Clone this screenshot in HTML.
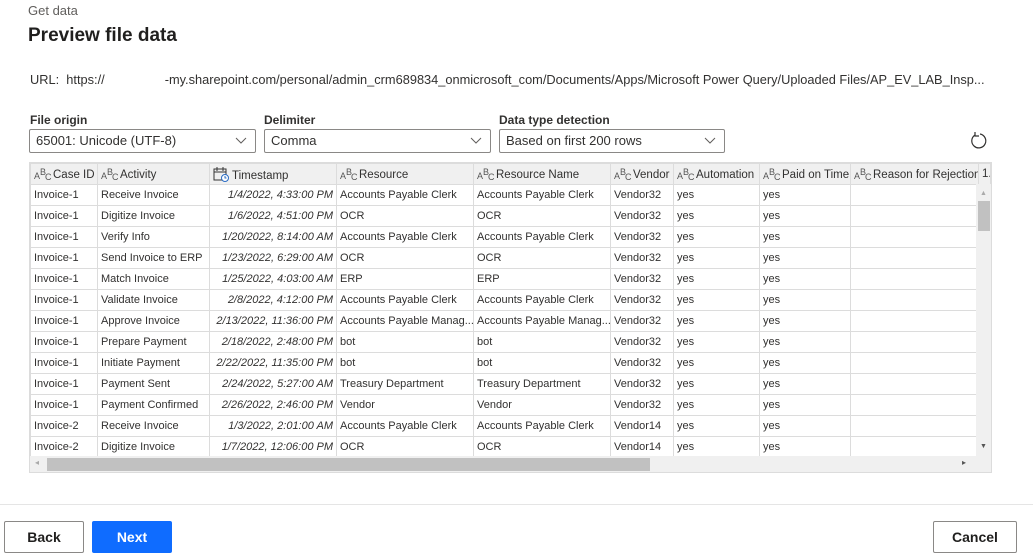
<!DOCTYPE html>
<html><head><style>
*{box-sizing:border-box;margin:0;padding:0}
body{width:1033px;height:556px;background:#fff;font-family:"Liberation Sans",sans-serif;color:#201f1e;position:relative;overflow:hidden}
.a{position:absolute}
.lbl{font-size:12px;font-weight:bold;color:#323130}
.sel{position:absolute;top:129px;height:24px;border:1px solid #8a8886;border-radius:2px;font-size:13px;padding:3px 6px;color:#323130}
.sel svg{position:absolute;right:8px;top:7px}
table{border-collapse:collapse;table-layout:fixed;font-size:11px;color:#323130}
td,th{height:21px;border:1px solid #dcdcdc;padding:0 3px;white-space:nowrap;overflow:hidden;text-align:left;font-weight:normal}
th{background:#f0f0f0;font-size:11.5px;height:21px}
td.t{text-align:right;font-style:italic}
.ic{display:inline-block;position:relative;width:17px;height:14px;vertical-align:-3px;font-size:9px;color:#555;margin-right:2px}
.ic i{position:absolute;font-style:normal}
.btn{position:absolute;top:521px;height:32px;border:1px solid #8a8886;border-radius:2px;font-size:14px;font-weight:bold;text-align:center;line-height:30px}
</style></head><body>
<div class="a" style="left:28px;top:3px;font-size:13px;color:#605e5c">Get data</div>
<div class="a" style="left:28px;top:25px;font-size:19px;font-weight:bold;color:#201f1e">Preview file data</div>
<div class="a" style="left:30px;top:72px;font-size:12.8px;color:#323130">URL:&nbsp; https://<span style="display:inline-block;width:60px"></span>-my.sharepoint.com/personal/admin_crm689834_onmicrosoft_com/Documents/Apps/Microsoft Power Query/Uploaded Files/AP_EV_LAB_Insp...</div>
<div class="a lbl" style="left:30px;top:113px">File origin</div>
<div class="a lbl" style="left:264px;top:113px">Delimiter</div>
<div class="a lbl" style="left:499px;top:113px">Data type detection</div>
<div class="sel" style="left:29px;width:227px">65001: Unicode (UTF-8)<svg width="12" height="8"><path d="M1 1l5 5 5-5" stroke="#605e5c" fill="none"/></svg></div>
<div class="sel" style="left:264px;width:227px">Comma<svg width="12" height="8"><path d="M1 1l5 5 5-5" stroke="#605e5c" fill="none"/></svg></div>
<div class="sel" style="left:499px;width:226px">Based on first 200 rows<svg width="12" height="8"><path d="M1 1l5 5 5-5" stroke="#605e5c" fill="none"/></svg></div>
<svg class="a" style="left:969px;top:131px" width="20" height="20"><path d="M6 4A7 7 0 1 0 11 3" stroke="#323130" fill="none" stroke-width="1.2"/><path d="M6 1v4h4" stroke="#323130" fill="none" stroke-width="1.2"/></svg>
<div class="a" style="left:29px;top:162px;width:963px;height:311px;border:1px solid #dcdcdc;overflow:hidden">
<table style="width:960px">
<colgroup><col style="width:67px"><col style="width:112px"><col style="width:127px"><col style="width:137px"><col style="width:137px"><col style="width:63px"><col style="width:86px"><col style="width:91px"><col style="width:128px"><col style="width:12px"></colgroup>
<tr><th><span class="ic"><i style="left:0;top:4px">A</i><i style="left:6px;top:0">B</i><i style="left:11px;top:5px">C</i></span>Case ID</th><th><span class="ic"><i style="left:0;top:4px">A</i><i style="left:6px;top:0">B</i><i style="left:11px;top:5px">C</i></span>Activity</th><th><svg width="16" height="15" style="vertical-align:-3px;margin-right:3px"><rect x="1" y="2" width="12" height="11" fill="none" stroke="#333"/><path d="M1 5h12M4 0v4M10 0v4" stroke="#333"/><circle cx="12" cy="11" r="3.5" fill="#fff" stroke="#2a6cc4"/><path d="M12 9v2h1.5" stroke="#2a6cc4" fill="none"/></svg>Timestamp</th><th><span class="ic"><i style="left:0;top:4px">A</i><i style="left:6px;top:0">B</i><i style="left:11px;top:5px">C</i></span>Resource</th><th><span class="ic"><i style="left:0;top:4px">A</i><i style="left:6px;top:0">B</i><i style="left:11px;top:5px">C</i></span>Resource Name</th><th><span class="ic"><i style="left:0;top:4px">A</i><i style="left:6px;top:0">B</i><i style="left:11px;top:5px">C</i></span>Vendor</th><th><span class="ic"><i style="left:0;top:4px">A</i><i style="left:6px;top:0">B</i><i style="left:11px;top:5px">C</i></span>Automation</th><th><span class="ic"><i style="left:0;top:4px">A</i><i style="left:6px;top:0">B</i><i style="left:11px;top:5px">C</i></span>Paid on Time</th><th><span class="ic"><i style="left:0;top:4px">A</i><i style="left:6px;top:0">B</i><i style="left:11px;top:5px">C</i></span>Reason for Rejection</th><th>1.</th></tr>
<tr><td>Invoice-1</td><td>Receive Invoice</td><td class="t">1/4/2022, 4:33:00 PM</td><td>Accounts Payable Clerk</td><td>Accounts Payable Clerk</td><td>Vendor32</td><td>yes</td><td>yes</td><td></td><td></td></tr>
<tr><td>Invoice-1</td><td>Digitize Invoice</td><td class="t">1/6/2022, 4:51:00 PM</td><td>OCR</td><td>OCR</td><td>Vendor32</td><td>yes</td><td>yes</td><td></td><td></td></tr>
<tr><td>Invoice-1</td><td>Verify Info</td><td class="t">1/20/2022, 8:14:00 AM</td><td>Accounts Payable Clerk</td><td>Accounts Payable Clerk</td><td>Vendor32</td><td>yes</td><td>yes</td><td></td><td></td></tr>
<tr><td>Invoice-1</td><td>Send Invoice to ERP</td><td class="t">1/23/2022, 6:29:00 AM</td><td>OCR</td><td>OCR</td><td>Vendor32</td><td>yes</td><td>yes</td><td></td><td></td></tr>
<tr><td>Invoice-1</td><td>Match Invoice</td><td class="t">1/25/2022, 4:03:00 AM</td><td>ERP</td><td>ERP</td><td>Vendor32</td><td>yes</td><td>yes</td><td></td><td></td></tr>
<tr><td>Invoice-1</td><td>Validate Invoice</td><td class="t">2/8/2022, 4:12:00 PM</td><td>Accounts Payable Clerk</td><td>Accounts Payable Clerk</td><td>Vendor32</td><td>yes</td><td>yes</td><td></td><td></td></tr>
<tr><td>Invoice-1</td><td>Approve Invoice</td><td class="t">2/13/2022, 11:36:00 PM</td><td>Accounts Payable Manag...</td><td>Accounts Payable Manag...</td><td>Vendor32</td><td>yes</td><td>yes</td><td></td><td></td></tr>
<tr><td>Invoice-1</td><td>Prepare Payment</td><td class="t">2/18/2022, 2:48:00 PM</td><td>bot</td><td>bot</td><td>Vendor32</td><td>yes</td><td>yes</td><td></td><td></td></tr>
<tr><td>Invoice-1</td><td>Initiate Payment</td><td class="t">2/22/2022, 11:35:00 PM</td><td>bot</td><td>bot</td><td>Vendor32</td><td>yes</td><td>yes</td><td></td><td></td></tr>
<tr><td>Invoice-1</td><td>Payment Sent</td><td class="t">2/24/2022, 5:27:00 AM</td><td>Treasury Department</td><td>Treasury Department</td><td>Vendor32</td><td>yes</td><td>yes</td><td></td><td></td></tr>
<tr><td>Invoice-1</td><td>Payment Confirmed</td><td class="t">2/26/2022, 2:46:00 PM</td><td>Vendor</td><td>Vendor</td><td>Vendor32</td><td>yes</td><td>yes</td><td></td><td></td></tr>
<tr><td>Invoice-2</td><td>Receive Invoice</td><td class="t">1/3/2022, 2:01:00 AM</td><td>Accounts Payable Clerk</td><td>Accounts Payable Clerk</td><td>Vendor14</td><td>yes</td><td>yes</td><td></td><td></td></tr>
<tr><td>Invoice-2</td><td>Digitize Invoice</td><td class="t">1/7/2022, 12:06:00 PM</td><td>OCR</td><td>OCR</td><td>Vendor14</td><td>yes</td><td>yes</td><td></td><td></td></tr>
</table>
<div class="a" style="left:946px;top:21px;width:16px;height:272px;background:#f0f0f0"><div style="position:absolute;left:2px;top:17px;width:12px;height:30px;background:#c1c1c1"></div><div style="position:absolute;left:4px;top:6px;font-size:7px;color:#aaa">▲</div><div style="position:absolute;left:4px;bottom:6px;font-size:7px;color:#555">▼</div></div>
<div class="a" style="left:0;top:293px;width:962px;height:17px;background:#f0f0f0"><div style="position:absolute;left:17px;top:2px;width:603px;height:13px;background:#c1c1c1"></div><div style="position:absolute;left:5px;top:2px;font-size:8px;color:#aaa">◂</div><div style="position:absolute;left:932px;top:2px;font-size:8px;color:#555">▸</div></div>
</div>
<div class="a" style="left:0;top:504px;width:1033px;height:1px;background:#e5e5e5"></div>
<div class="btn" style="left:4px;width:80px;color:#201f1e;background:#fff">Back</div>
<div class="btn" style="left:92px;width:80px;background:#0f6cff;border-color:#0f6cff;color:#fff">Next</div>
<div class="btn" style="left:933px;width:84px;color:#201f1e;background:#fff">Cancel</div>
</body></html>
